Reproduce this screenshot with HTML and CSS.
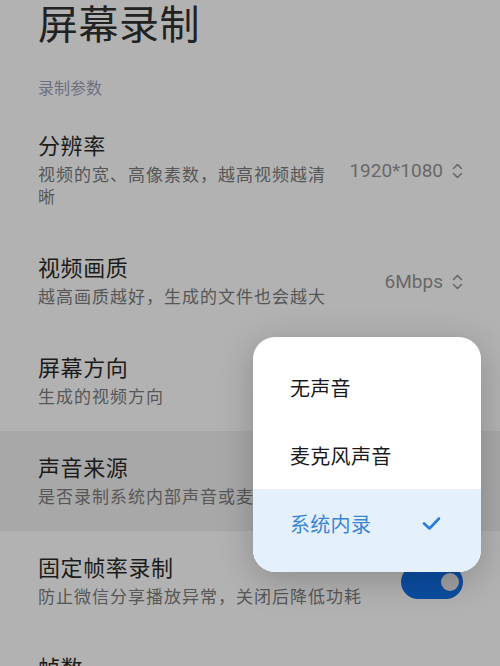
FILE: index.html
```html
<!DOCTYPE html>
<html lang="zh-CN">
<head>
    <meta charset="UTF-8">
    <meta name="viewport" content="width=device-width, initial-scale=1.0">
    <title>屏幕录制</title>
    <link rel="stylesheet" href="styles.css">
</head>
<body>
    <div class="screen">
        <header class="page-head">
            <h1>屏幕录制</h1>
            <div class="section-label">录制参数</div>
        </header>

        <div class="list">
            <div class="row">
                <div class="row-text">
                    <div class="row-title">分辨率</div>
                    <div class="row-sub">视频的宽、高像素数，越高视频越清晰</div>
                </div>
                <div class="row-value">
                    <span>1920*1080</span>
                    <svg class="chevron" width="11" height="18" viewBox="0 0 11 18"><path d="M1.5 6.5 L5.5 2.5 L9.5 6.5 M1.5 11.5 L5.5 15.5 L9.5 11.5"/></svg>
                </div>
            </div>
            <div class="row">
                <div class="row-text">
                    <div class="row-title">视频画质</div>
                    <div class="row-sub">越高画质越好，生成的文件也会越大</div>
                </div>
                <div class="row-value">
                    <span>6Mbps</span>
                    <svg class="chevron" width="11" height="18" viewBox="0 0 11 18"><path d="M1.5 6.5 L5.5 2.5 L9.5 6.5 M1.5 11.5 L5.5 15.5 L9.5 11.5"/></svg>
                </div>
            </div>
            <div class="row">
                <div class="row-text">
                    <div class="row-title">屏幕方向</div>
                    <div class="row-sub">生成的视频方向</div>
                </div>
            </div>
            <div class="row row-active">
                <div class="row-text">
                    <div class="row-title">声音来源</div>
                    <div class="row-sub">是否录制系统内部声音或麦克风声音</div>
                </div>
            </div>
            <div class="row">
                <div class="row-text">
                    <div class="row-title">固定帧率录制</div>
                    <div class="row-sub">防止微信分享播放异常，关闭后降低功耗</div>
                </div>
                <div class="switch"><span class="switch-thumb"></span></div>
            </div>
            <div class="row">
                <div class="row-text">
                    <div class="row-title">帧数</div>
                </div>
            </div>
        </div>

        <div class="popup">
            <div class="popup-item">无声音</div>
            <div class="popup-item">麦克风声音</div>
            <div class="popup-item selected">
                <span>系统内录</span>
                <svg class="check" width="19" height="15" viewBox="0 0 19 15"><path d="M2 7.5 L7.5 12.5 L17 2.5"/></svg>
            </div>
        </div>
    </div>
</body>
</html>
```

FILE: styles.css
```css
* { box-sizing: border-box; margin: 0; padding: 0; }
body {
    font-family: Roboto, "Noto Sans CJK SC", sans-serif; background-color: #b2b2b2; color: #1c1c1c;
    width: 500px; height: 666px; overflow: hidden;
}
.screen { position: relative; height: 666px; }

.page-head { padding: 2px 38px 9px; }
.page-head h1 { font-size: 40px; font-weight: 400; line-height: 48px; color: #222222; letter-spacing: 0.5px; }
.section-label { margin-top: 28px; font-size: 16px; line-height: 22px; color: #6c7082; }

.row {
    display: flex; align-items: center; gap: 14px; padding: 24px 37px 23px 38px;
}
.row-active { background-color: #a8a8a8; }
.row-text { flex: 1; min-width: 0; }
.row-title { font-size: 22px; line-height: 28px; letter-spacing: 0.6px; color: #1c1c1c; }
.row-sub { margin-top: 3px; font-size: 17px; line-height: 22px; letter-spacing: 1px; color: #575757; }

.row-value { flex: none; display: flex; align-items: center; gap: 9px; font-size: 19px; color: #686868; }
.chevron path { fill: none; stroke: #686868; stroke-width: 1.6; stroke-linecap: round; stroke-linejoin: round; }

.switch {
    flex: none; width: 62px; height: 34px; border-radius: 17px; background-color: #0b4ea2;
    display: flex; align-items: center; justify-content: flex-end; padding: 0 4px;
}
.switch-thumb { width: 18px; height: 18px; border-radius: 50%; background-color: #a2a2a2; }

.popup {
    position: absolute; left: 253px; top: 337px; width: 228px; height: 235px;
    background-color: #ffffff; border-radius: 22px; overflow: hidden; padding-top: 16px;
    box-shadow: 0 8px 36px rgba(0, 0, 0, 0.22);
}
.popup-item {
    display: flex; align-items: center; justify-content: space-between; height: 68px;
    padding: 0 40px 0 37px; font-size: 20px; color: #1a1a1a; letter-spacing: 0.3px;
}
.popup-item.selected {
    height: 83px; padding-bottom: 14px; background-color: #e4f0fc; color: #3a86d4;
}
.check path { fill: none; stroke: #2b7bd8; stroke-width: 2.6; stroke-linecap: round; stroke-linejoin: round; }
```
